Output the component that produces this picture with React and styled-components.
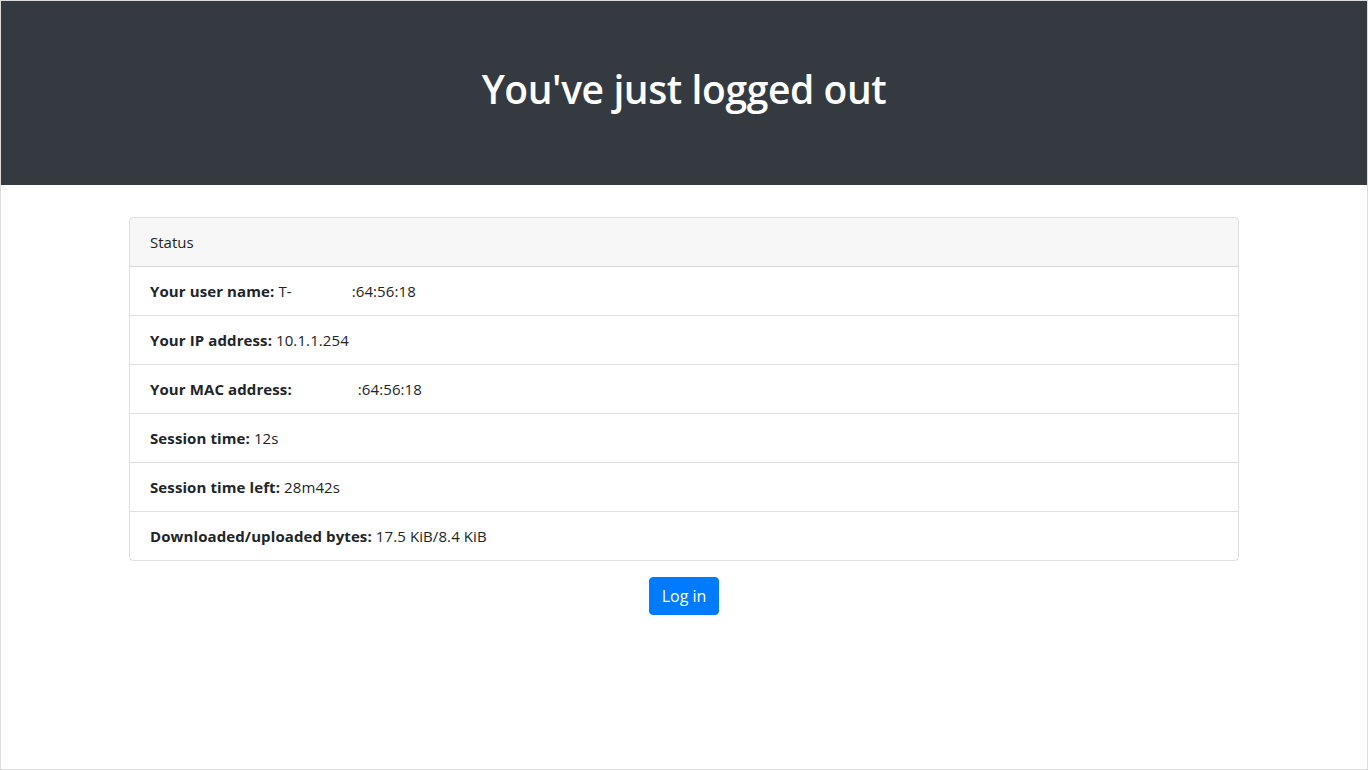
import styled, { createGlobalStyle } from "styled-components";

const GlobalStyle = createGlobalStyle`
  html, body {
    margin: 0;
    padding: 0;
  }
  body {
    font-family: "Open Sans", "Noto Sans", "Liberation Sans", sans-serif;
    font-size: 16px;
    line-height: 1.5;
    color: #212529;
    background: #ffffff;
  }
  * {
    box-sizing: border-box;
  }
`;

const Page = styled.div`
  height: 770px;
  border: 1px solid #dcdcdc;
  display: flex;
  flex-direction: column;
`;

const Header = styled.header`
  background: #343a40;
  color: #ffffff;
  padding: 64px 32px 64px;
  text-align: center;
`;

const Title = styled.h1`
  margin: 0 0 8px;
  font-size: 39px;
  font-weight: 600;
  line-height: 48px;
  letter-spacing: -0.4px;
`;

const Container = styled.main`
  width: 1110px;
  margin: 32px auto 0;
  display: flex;
  flex-direction: column;
  align-items: center;
`;

const Card = styled.section`
  width: 100%;
  border: 1px solid rgba(0, 0, 0, 0.125);
  border-radius: 4px;
  overflow: hidden;
`;

const CardHeader = styled.div`
  padding: 12px 20px;
  background: rgba(0, 0, 0, 0.03);
  border-bottom: 1px solid rgba(0, 0, 0, 0.125);
  font-size: 15px;
  line-height: 24px;
`;

const List = styled.ul`
  list-style: none;
  margin: 0;
  padding: 0;
`;

const Item = styled.li`
  padding: 12px 20px;
  font-size: 15px;
  line-height: 24px;
  letter-spacing: 0.1px;
  border-top: ${(p) => (p.$first ? "none" : "1px solid rgba(0, 0, 0, 0.125)")};
`;

const Label = styled.b`
  font-weight: 700;
`;

const Redacted = styled.span`
  display: inline-block;
  width: ${(p) => p.$width}px;
`;

const Button = styled.button`
  margin-top: 16px;
  background: #007bff;
  color: #ffffff;
  border: 1px solid #007bff;
  border-radius: 4px;
  padding: 6px 12px;
  font-family: inherit;
  font-size: 16px;
  line-height: 24px;
  cursor: pointer;
`;

const rows = [
  { label: "Your user name:", value: <>T-<Redacted $width={60} />:64:56:18</> },
  { label: "Your IP address:", value: "10.1.1.254" },
  { label: "Your MAC address:", value: <><Redacted $width={62} />:64:56:18</> },
  { label: "Session time:", value: "12s" },
  { label: "Session time left:", value: "28m42s" },
  { label: "Downloaded/uploaded bytes:", value: "17.5 KiB/8.4 KiB" },
];

export default function App() {
  return (
    <Page>
      <GlobalStyle />
      <Header>
        <Title>You've just logged out</Title>
      </Header>
      <Container>
        <Card>
          <CardHeader>Status</CardHeader>
          <List>
            {rows.map((row, i) => (
              <Item key={row.label} $first={i === 0}>
                <Label>{row.label}</Label> {row.value}
              </Item>
            ))}
          </List>
        </Card>
        <Button type="button">Log in</Button>
      </Container>
    </Page>
  );
}
